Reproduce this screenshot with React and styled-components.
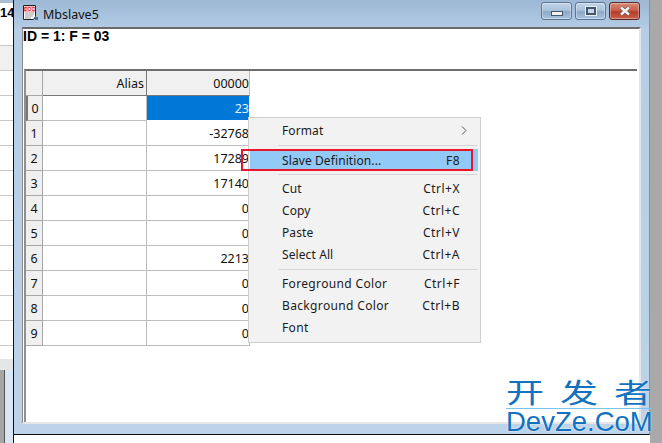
import styled, { createGlobalStyle } from "styled-components";

const GlobalStyle = createGlobalStyle`
  html, body {
    margin: 0;
    padding: 0;
    background: #fff;
  }
`;

const Desktop = styled.div`
  position: relative;
  width: 662px;
  height: 443px;
  overflow: hidden;
  display: flex;
  background: #fff;
  font-family: "Noto Sans", sans-serif;
`;

/* window behind, only its right edge is visible */
const BehindWindow = styled.div`
  width: 13px;
  height: 443px;
  flex: none;
  display: flex;
  flex-direction: column;
  border-right: 1px solid #111;
  background: #fff;
`;

const BehindTop = styled.div`
  height: 46px;
  box-sizing: border-box;
  border-top: 3px solid #a9bfd6;
  border-bottom: 1px solid #c8c8c8;
  font: bold 13px "Liberation Sans", sans-serif;
  line-height: 19px;
  text-align: right;
  color: #000;
  overflow: hidden;
`;

const BehindHead = styled.div`
  height: 24px;
  background: #f0f0f0;
  border-bottom: 1px solid #c8c8c8;
`;

const BehindRow = styled.div`
  height: 24px;
  border-bottom: 1px solid #c8c8c8;
`;

const BehindGap = styled.div`
  height: 13px;
`;

const BehindBand = styled.div`
  height: 11px;
  background: #e4e6e8;
`;

const BehindBottom = styled.div`
  flex: 1;
  display: flex;
`;

const BehindGray = styled.div`
  width: 4px;
  background: #a6a6a6;
  border-right: 1px solid #555;
`;

const BehindFrame = styled.div`
  flex: 1;
  background: #d9e6f3;
`;

const Window = styled.div`
  width: 636px;
  height: 435px;
  flex: none;
  box-sizing: border-box;
  display: flex;
  flex-direction: column;
  padding: 0 8px 10px 8px;
  background: linear-gradient(180deg, #9db8d5 0, #b5cde6 30px, #bcd3ea 100%);
  border-bottom: 1px solid #0b0b0b;
  border-right: 1px solid #29b7d8;
`;

const TitleBar = styled.div`
  height: 27px;
  flex: none;
  display: flex;
  align-items: center;
  gap: 4px;
`;

const TitleIcon = styled.svg`
  width: 17px;
  height: 17px;
  flex: none;
  margin-top: -2px;
`;

const TitleText = styled.span`
  flex: 1;
  font-size: 12.5px;
  color: #111;
  line-height: 15px;
  margin-top: 2px;
`;

const WindowButtons = styled.div`
  display: flex;
  gap: 3px;
  margin: -5px 1px 0 0;
`;

const WindowButton = styled.div`
  width: 31px;
  height: 18px;
  box-sizing: border-box;
  border: 1px solid ${(p) => (p.$close ? "#5a2a2a" : "#5f7690")};
  border-radius: 3px;
  display: flex;
  align-items: center;
  justify-content: center;
  box-shadow: inset 0 0 0 1px rgba(255, 255, 255, 0.35);
  background: ${(p) =>
    p.$close
      ? "linear-gradient(180deg, #d98a78 0, #c9604c 45%, #b53c28 55%, #c9604c 100%)"
      : "linear-gradient(180deg, #c3d5e9 0, #a9c2dc 45%, #8ba8c8 55%, #a9c4df 100%)"};
`;

const MinGlyph = styled.div`
  width: 10px;
  height: 3px;
  margin-top: 5px;
  background: #f2f2f2;
  border: 1px solid #46566a;
`;

const MaxGlyph = styled.div`
  width: 6px;
  height: 4px;
  border: 2px solid #46566a;
  outline: 1px solid #e8eef5;
  background: #c8d6e6;
`;

const Client = styled.div`
  flex: 1;
  display: flex;
  flex-direction: column;
  background: #fff;
  border-top: 2px solid #6b6b6b;
  border-left: 1px solid #8a8a8a;
  border-right: 2px solid #e6e6e6;
  border-bottom: 2px solid #e6e6e6;
`;

const InfoPanel = styled.div`
  height: 40px;
  flex: none;
  font: bold 14px/15px "Liberation Sans", sans-serif;
  color: #000;
  white-space: pre;
`;

const GridPanel = styled.div`
  flex: 1;
  margin: 0 2px 0 1px;
  border-top: 2px solid #6e6e6e;
  border-left: 2px solid #909090;
`;

const Grid = styled.div`
  display: grid;
  grid-template-columns: 17px 104px 103px;
  grid-auto-rows: 25px;
  width: 224px;
  font-size: 12.5px;
  color: #111;
`;

const Corner = styled.div`
  background: #f0f0f0;
  border-right: 1px solid #a8a8a8;
  border-bottom: 1px solid #a8a8a8;
`;

const ColHead = styled.div`
  box-sizing: border-box;
  background: #f0f0f0;
  display: flex;
  align-items: center;
  justify-content: flex-end;
  padding-right: ${(p) => (p.$last ? "0" : "2px")};
  border-bottom: 1px solid #777;
  border-right: 1px solid ${(p) => (p.$last ? "#c0c0c0" : "#777")};
`;

const RowHead = styled.div`
  box-sizing: border-box;
  background: #f0f0f0;
  display: flex;
  align-items: center;
  justify-content: center;
  border-bottom: 1px solid #a8a8a8;
  border-right: 1px solid #a8a8a8;
  border-left: ${(p) => (p.$active ? "2px solid #777" : "0")};
`;

const Cell = styled.div`
  box-sizing: border-box;
  display: flex;
  align-items: center;
  justify-content: flex-end;
  background: ${(p) => (p.$selected ? "#0078d7" : "#fff")};
  color: ${(p) => (p.$selected ? "#e6f2fb" : "#111")};
  border-bottom: 1px solid ${(p) => (p.$selected ? "#fff" : "#bdbdbd")};
  border-right: 1px solid ${(p) => (p.$selected ? "#fff" : "#bdbdbd")};
`;

const Menu = styled.div`
  position: absolute;
  left: 248px;
  top: 117px;
  width: 233px;
  height: 226px;
  box-sizing: border-box;
  padding: 1px 2px 0 1px;
  background: #f2f2f2;
  border: 1px solid #cfcfcf;
  font-size: 12px;
  letter-spacing: 0.1px;
  color: #1a1a1a;
`;

const MenuItem = styled.div`
  height: 22px;
  display: flex;
  align-items: center;
  padding: 0 ${(p) => (p.$arrow ? "11px" : "18px")} 0 32px;
  background: ${(p) => (p.$hot ? "#91c9f7" : "transparent")};
`;

const MenuLabel = styled.span`
  flex: 1;
  letter-spacing: ${(p) => (p.$wide ? "0.35px" : "inherit")};
`;

const MenuKey = styled.span`
  letter-spacing: 0.5px;
`;

const MenuSeparator = styled.div`
  height: 1px;
  margin: ${(p) => p.$above}px 1px ${(p) => p.$below}px 28px;
  background: #d4d4d4;
`;

const Arrow = styled.svg`
  width: 6px;
  height: 9px;
`;

const RedBox = styled.div`
  position: absolute;
  left: 241px;
  top: 149px;
  width: 232px;
  height: 22px;
  box-sizing: border-box;
  border: 2px solid #e8162a;
`;

const Watermark = styled.div`
  position: absolute;
  left: 506px;
  top: 374px;
  width: 146px;
  color: #1272bf;
  text-shadow: 0 0 2px #fff;
`;

const WatermarkCn = styled.div`
  display: flex;
  justify-content: space-between;
  height: 34px;
  border-bottom: 1px solid #7cc4ee;
`;

const WatermarkGlyph = styled.span`
  font: 38px/34px "Noto Sans CJK SC", sans-serif;
  transform: scaleY(0.72);
`;

const WatermarkEn = styled.div`
  font: 27.5px/23px "Liberation Sans", sans-serif;
  white-space: nowrap;
  margin-top: 1px;
`;

const RightGray = styled.div`
  flex: 1;
  height: 443px;
  background: #a9a9a9;
`;

const rows = ["23", "-32768", "17289", "17140", "0", "0", "2213", "0", "0", "0"];

const menuTop = [
  { label: "Cut", key: "Ctrl+X" },
  { label: "Copy", key: "Ctrl+C" },
  { label: "Paste", key: "Ctrl+V" },
  { label: "Select All", key: "Ctrl+A" },
];
const menuBottom = [
  { label: "Foreground Color", key: "Ctrl+F" },
  { label: "Background Color", key: "Ctrl+B" },
  { label: "Font", key: "" },
];

function DocIcon() {
  return (
    <TitleIcon viewBox="0 0 17 17">
      <path d="M1.5 1.5h12v11l-2 3H1.5z" fill="#fff" stroke="#222" strokeWidth="1" />
      <rect x="3" y="3" width="9" height="5" fill="#fff" stroke="#d91f1f" strokeWidth="0.6" />
      <text x="7.5" y="7.4" fontSize="5" fontWeight="bold" fontFamily="Liberation Sans" textAnchor="middle" fill="#d91f1f">
        DOC
      </text>
      <path d="M3 10h9M3 12h8M3 14h6" stroke="#999" strokeWidth="1" />
      <rect x="13" y="13" width="3" height="3" fill="#2a7fa8" />
    </TitleIcon>
  );
}

function Row({ index, value }) {
  return (
    <>
      <RowHead $active={index === 0}>{index}</RowHead>
      <Cell />
      <Cell $selected={index === 0}>{value}</Cell>
    </>
  );
}

export default function App() {
  return (
    <>
      <GlobalStyle />
      <Desktop>
        <BehindWindow>
          <BehindTop>14</BehindTop>
          <BehindHead />
          {[...Array(11)].map((_, i) => (
            <BehindRow key={i} />
          ))}
          <BehindGap />
          <BehindBand />
          <BehindBottom>
            <BehindGray />
            <BehindFrame />
          </BehindBottom>
        </BehindWindow>

        <Window>
          <TitleBar>
            <DocIcon />
            <TitleText>Mbslave5</TitleText>
            <WindowButtons>
              <WindowButton>
                <MinGlyph />
              </WindowButton>
              <WindowButton>
                <MaxGlyph />
              </WindowButton>
              <WindowButton $close>
                <svg width="14" height="10" viewBox="0 0 14 10">
                  <path d="M3 1.5l8 7M11 1.5l-8 7" stroke="#555" strokeWidth="3.6" />
                  <path d="M3 1.5l8 7M11 1.5l-8 7" stroke="#f4f4f4" strokeWidth="2.4" />
                </svg>
              </WindowButton>
            </WindowButtons>
          </TitleBar>
          <Client>
            <InfoPanel>ID = 1: F = 03</InfoPanel>
            <GridPanel>
              <Grid>
                <Corner />
                <ColHead>Alias</ColHead>
                <ColHead $last>00000</ColHead>
                {rows.map((value, i) => (
                  <Row key={i} index={i} value={value} />
                ))}
              </Grid>
            </GridPanel>
          </Client>
        </Window>

        <RightGray />

        <Menu>
          <MenuItem $arrow>
            <MenuLabel>Format</MenuLabel>
            <Arrow viewBox="0 0 6 9">
              <path d="M1 .5l4 4-4 4" fill="none" stroke="#555" />
            </Arrow>
          </MenuItem>
          <MenuSeparator $above={4} $below={3} />
          <MenuItem $hot>
            <MenuLabel>Slave Definition...</MenuLabel>
            <MenuKey>F8</MenuKey>
          </MenuItem>
          <MenuSeparator $above={3} $below={2} />
          {menuTop.map((m) => (
            <MenuItem key={m.label}>
              <MenuLabel>{m.label}</MenuLabel>
              <MenuKey>{m.key}</MenuKey>
            </MenuItem>
          ))}
          <MenuSeparator $above={4} $below={2} />
          {menuBottom.map((m) => (
            <MenuItem key={m.label}>
              <MenuLabel $wide>{m.label}</MenuLabel>
              <MenuKey>{m.key}</MenuKey>
            </MenuItem>
          ))}
        </Menu>
        <RedBox />

        <Watermark>
          <WatermarkCn>
            <WatermarkGlyph>开</WatermarkGlyph>
            <WatermarkGlyph>发</WatermarkGlyph>
            <WatermarkGlyph>者</WatermarkGlyph>
          </WatermarkCn>
          <WatermarkEn>DevZe.CoM</WatermarkEn>
        </Watermark>
      </Desktop>
    </>
  );
}
